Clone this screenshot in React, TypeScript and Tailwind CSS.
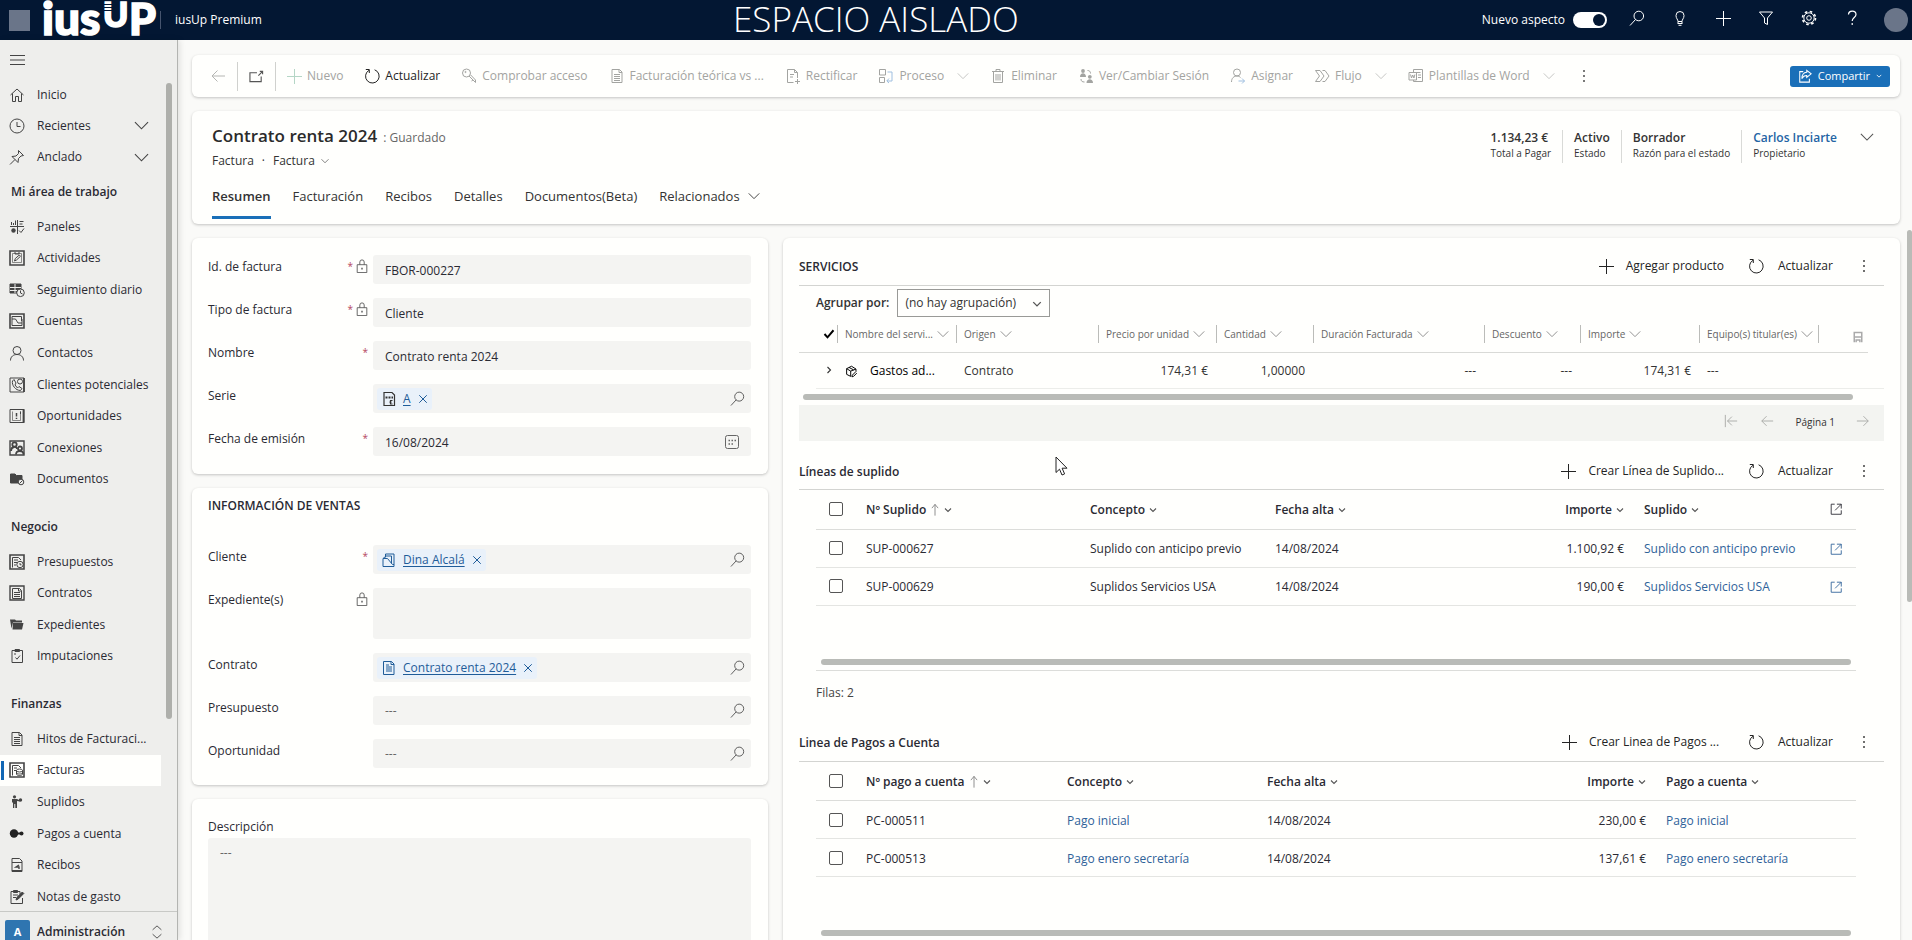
import type { ReactNode } from "react";

type SvgProps = { className?: string; children: ReactNode };

const Svg = ({ className = "size-4", children }: SvgProps) => (
  <svg viewBox="0 0 16 16" fill="none" stroke="currentColor" strokeWidth="1" aria-hidden="true" className={`shrink-0 ${className}`}>
    {children}
  </svg>
);

type IconProps = { className?: string };

const Chevron = ({ className = "size-3" }: IconProps) => (
  <Svg className={className}><path d="M1 4.5 8 11.5 15 4.5" strokeWidth="1.2" /></Svg>
);
const SmallChevron = ({ className = "size-2" }: IconProps) => (
  <Svg className={className}><path d="M2 5 8 11 14 5" strokeWidth="2.2" /></Svg>
);
const Search = ({ className }: IconProps) => (
  <Svg className={className}><circle cx="9.8" cy="6" r="4.8" /><path d="M6.5 9.5 1 15.5" /></Svg>
);
const Plus = ({ className }: IconProps) => (
  <Svg className={className}><path d="M8.5 1v15M1 8.5h15" /></Svg>
);
const Refresh = ({ className }: IconProps) => (
  <Svg className={className}><path d="M5 2.3A6.8 6.8 0 1 0 10.6 1.8M1.8 1.5H5.3V5" /></Svg>
);
const Close = ({ className = "size-2.5" }: IconProps) => (
  <Svg className={className}><path d="M2 2l12 12M14 2 2 14" strokeWidth="1.6" /></Svg>
);
const Lock = () => (
  <Svg className="size-3.5"><path d="M2.500 6.500h11v9h-11z" /><path d="M5.500 6.500V3.500a2.500 2.500 0 0 1 5 0v3" /><path d="M7.2 11h1.6" strokeWidth="1.8" /></Svg>
);
const More = () => (
  <Svg className="size-4"><path d="M8 2v2M8 7v2M8 12v2" strokeWidth="1.3" /></Svg>
);
const ArrowLeft = ({ className }: IconProps) => (
  <Svg className={className}><path d="M15 8H2M7.5 2.5 2 8l5.5 5.5" /></Svg>
);
const ArrowRight = ({ className }: IconProps) => (
  <Svg className={className}><path d="M1 8h13M8.5 2.5 14 8l-5.5 5.5" /></Svg>
);
const OpenOut = ({ className = "size-3.5" }: IconProps) => (
  <Svg className={className}><path d="M6.5 2.500H2.500v11.500H14V9.500M9 2.500h5V7.500M14 2.500 7 9.500" /></Svg>
);
const DocLines = ({ className }: IconProps) => (
  <Svg className={className}><path d="M3 1.5h7.5L13 4v10.5H3zM10 1.5V4.5h3" /><path d="M5 6.5h6M5 8.5h6M5 10.5h6M5 12.5h6" /></Svg>
);

const sideIcons: Record<string, ReactNode> = {
  Inicio: <Svg><path d="M1.5 8 8 2l6.5 6M3.500 6.500v8h3v-5h3v5h3v-8" /></Svg>,
  Recientes: <Svg><circle cx="8" cy="8" r="7" /><path d="M8 4v4.5h3.5" /></Svg>,
  Anclado: <Svg><path d="M9.500 1.500 14.500 6.500l-2.500.5-2.500 2.500-.5 4L3 7.500 7 7l2.500-2.500zM6 10.500 1 15.500" /></Svg>,
  Paneles: <Svg><path d="M8.500 1v14M1 7.500h14" /><path d="M2.500 3v3M4.500 4v2M6.500 1.500V6M10.500 2.500h4M10.500 5h3M10 11.500l2 2 3-4" /><circle cx="4.500" cy="11.500" r="2.200" fill="currentColor" stroke="none" /></Svg>,
  Actividades: <Svg><path d="M1 1h14v14H1z" strokeWidth="1.600" /><path d="M3.500 3.500h9v9h-9z" opacity=".6" /><path d="M6 2v2h4V2M5.500 11l.8-2.500 4-3.500 1.200 1.300-4 3.700z" /></Svg>,
  "Seguimiento diario": <Svg><path d="M1 2h11v9H1z" fill="currentColor" /><path d="M1 5.500h11M1 8.500h11M6 2v9" stroke="#eeeeec" /><circle cx="11.500" cy="10.800" r="3.800" fill="#eeeeec" /><path d="M11.500 8.500V11l2 1" /></Svg>,
  Cuentas: <Svg><path d="M1 1h14v14H1z" strokeWidth="1.600" /><path d="M3 3.500h9.500V8M3 6h3.500l2.500 4h4V6M3 3.500v9h10V10" /></Svg>,
  Contactos: <Svg><circle cx="8" cy="5.500" r="4" /><path d="M1.500 15.500c0-4 3-6 6.500-6s6.500 2 6.500 6" /></Svg>,
  "Clientes potenciales": <Svg><path d="M1 1h14v14H1z" /><path d="M15 1v14" strokeWidth="1.800" /><path d="M3.500 4c-1 4 3 9.500 8 9.500l1.500-2-3-2-1.500 1.500-2.500-3L7 6 5 2.500z" /><circle cx="11" cy="4.500" r="2.500" /></Svg>,
  Oportunidades: <Svg><path d="M1 1.500h14v13H1z" /><path d="M14.500 1v14" strokeWidth="1.800" /><path d="M3.500 3.500v9h8v-9" opacity=".6" /><path d="M7.500 5v3.500M7.500 9.800V11" strokeWidth="1.500" /><path d="M11.500 3.500V6" /></Svg>,
  Conexiones: <Svg><path d="M1 1h14v14H1z" strokeWidth="1.400" /><circle cx="5.500" cy="4.500" r="2.200" strokeWidth="1.800" /><circle cx="11" cy="8.500" r="2" strokeWidth="1.800" /><path d="M2 11c0-5 6-5 6-2M7 14.500c0-4.500 7.500-4.500 7.500 0" strokeWidth="1.800" /></Svg>,
  Documentos: <Svg><path d="M1.500 3H6l1.500 1.500H13V12H1.500z" fill="currentColor" /><circle cx="12" cy="11" r="2.800" fill="#eeeeec" /><path d="m10.500 12.500 3-3" /></Svg>,
  Presupuestos: <Svg><path d="M1 1h14v14H1z" strokeWidth="1.600" /><path d="M3.500 13.500v-10h6L12 6M5 6h4M5 8.500h3M5 11h2" /><circle cx="11" cy="10.500" r="3.200" /><path d="M11 9v1.800h1.500" /></Svg>,
  Contratos: <Svg><path d="M1 1h14v14H1z" strokeWidth="1.400" /><path d="M3.500 13.500v-10h7l2 2v8zM5 7.500h6M5 9.500h6M5 11.500h6M9.500 3.500v2.500H12" /></Svg>,
  Expedientes: <Svg><path d="M1 2.500h5l1 1h6v2H4l-1.500 6z" fill="currentColor" stroke="none" /><path d="M4 6h10.500L13 12.500H3.500z" fill="currentColor" stroke="none" /></Svg>,
  Imputaciones: <Svg><path d="M3 2.500h10.500v12H3z" /><path d="M6 1.500h4.500v2H6z" fill="currentColor" /><path d="m6.500 9.500 1.500 1.700L11 7.500M5 6h2" /></Svg>,
  "Hitos de Facturaci...": <DocLines />,
  Facturas: <Svg><path d="M1 1h14v14H1z" strokeWidth="1.600" /><path d="M3.500 13.500v-10h6L12 6M5 6h3M5 8.500h2" /><ellipse cx="10.500" cy="8.500" rx="3" ry="1.500" /><path d="M7.500 8.500v3.500c0 2 6 2 6 0V8.500M7.500 10.500c0 2 6 2 6 0" /></Svg>,
  Suplidos: <Svg><circle cx="5.500" cy="2.800" r="1.600" fill="currentColor" stroke="none" /><path d="M3 5h5l3 1.500v1L8 7v7H6.300v-4h-1v4H4V8.500H3z" fill="currentColor" stroke="none" /><circle cx="11.500" cy="6" r="1.700" fill="currentColor" stroke="none" /></Svg>,
  "Pagos a cuenta": <Svg><circle cx="5" cy="7.500" r="4.200" fill="#222" stroke="none" /><path d="M4 7.500h9" stroke="#222" strokeWidth="2" /><circle cx="12.500" cy="7.500" r="2" fill="#222" stroke="none" /></Svg>,
  Recibos: <Svg><path d="M3 1.500h7.500L13 4v10.500H3zM3 5.500h10M3 13.500h10" /><path d="M10 8 7 10h3v2" strokeWidth="1.400" /></Svg>,
  "Notas de gasto": <Svg><path d="M10 14.500H2v-12h9V5M13.500 9v5.500H10" /><path d="M4.500 1.500h4v2h-4z" fill="currentColor" /><path d="m7 11 .8-2.500 5.500-5.500 1.500 1.500-5.500 5.500zM4 6h5M4 8.500h3" fill="currentColor" /></Svg>,
};

function SideItem({ label, active, expandable }: { label: string; active?: boolean; expandable?: boolean }) {
  return (
    <a
      href="#"
      aria-current={active ? "page" : undefined}
      className={`flex items-center gap-3 pr-[17px] text-[12px] text-[#2a2a33] ${active ? "mr-[5px] bg-[#fffffd]" : ""}`}
    >
      <span className="flex items-center self-stretch pl-px">
        <span className={`h-[19px] w-[3px] ${active ? "bg-[#1267b4]" : ""}`} />
        <span className="pl-[5px] text-[#444]">{sideIcons[label]}</span>
      </span>
      <span className="flex-1 whitespace-nowrap">{label}</span>
      {expandable && <Chevron className="size-[15px] text-[#444]" />}
    </a>
  );
}

const SideHeading = ({ children, first }: { children: ReactNode; first?: boolean }) => (
  <h2 className={`flex h-[38px] shrink-0 items-center pl-[11px] text-[12px] font-semibold text-[#2a2a33] ${first ? "" : "mt-[13px]"}`}>{children}</h2>
);

function Sidebar() {
  return (
    <nav aria-label="Navegación" className="z-10 flex w-[178px] shrink-0 flex-col border-r border-[#b3b4b1] bg-[#eeeeec] shadow-[2px_0_6px_rgba(0,0,0,0.10)]">
      <div className="flex h-[39px] shrink-0 items-center pl-[9px]">
        <button type="button" aria-label="Menú" className="text-[#444]">
          <Svg><path d="M1 3.500h15M1 8h15M1 12.500h15" /></Svg>
        </button>
      </div>
      <div className="flex min-h-0 flex-1 overflow-hidden">
        <div className="flex w-[166px] flex-col">
          <div className="grid h-[94px] shrink-0 auto-rows-fr">
            <SideItem label="Inicio" />
            <SideItem label="Recientes" expandable />
            <SideItem label="Anclado" expandable />
          </div>
          <SideHeading first>Mi área de trabajo</SideHeading>
          <div className="grid h-[284px] shrink-0 auto-rows-fr">
            {["Paneles", "Actividades", "Seguimiento diario", "Cuentas", "Contactos", "Clientes potenciales", "Oportunidades", "Conexiones", "Documentos"].map((l) => (
              <SideItem key={l} label={l} />
            ))}
          </div>
          <SideHeading>Negocio</SideHeading>
          <div className="grid h-[126px] shrink-0 auto-rows-fr">
            {["Presupuestos", "Contratos", "Expedientes", "Imputaciones"].map((l) => (
              <SideItem key={l} label={l} />
            ))}
          </div>
          <SideHeading>Finanzas</SideHeading>
          <div className="grid h-[190px] shrink-0 auto-rows-fr">
            {["Hitos de Facturaci...", "Facturas", "Suplidos", "Pagos a cuenta", "Recibos", "Notas de gasto"].map((l) => (
              <SideItem key={l} label={l} active={l === "Facturas"} />
            ))}
          </div>
        </div>
        <div className="mt-1 h-[636px] w-1.5 shrink-0 rounded-full bg-[#aeafab]" />
      </div>
      <div className="h-[29px] shrink-0 overflow-hidden border-t border-[#c8c9c6]">
        <button type="button" className="flex h-[40px] w-full items-center pr-[13px] pl-[5px] text-left">
          <span className="flex size-[25px] items-center justify-center rounded-xs bg-[#2f75b0] text-[11px] font-bold text-white">A</span>
          <span className="flex-1 pl-[7px] text-[12px] leading-4 font-semibold text-[#2a2a33]">Administración</span>
          <Svg className="size-3.5 text-[#444]"><path d="M3 5.500 8 1l5 4.500M3 10.500 8 15l5-4.500" /></Svg>
        </button>
      </div>
    </nav>
  );
}

const topIcons: { label: string; icon: ReactNode }[] = [
  { label: "Buscar", icon: <Search /> },
  { label: "Sugerencias", icon: <Svg><path d="M6 11.500C6 9.500 4 8.500 4 5.500a4 4 0 0 1 8 0c0 3-2 4-2 6zM6.500 15.300h3M6 11.500v2.500M10 11.500v2.500M6 13.500h4" /></Svg> },
  { label: "Nuevo registro", icon: <Plus /> },
  { label: "Filtrar", icon: <Svg><path d="M1.500 2h13L9.500 8v6.500l-3-1.500V8z" /></Svg> },
  { label: "Configuración", icon: <Svg><circle cx="8" cy="8" r="5.200" /><circle cx="8" cy="8" r="2.300" /><circle cx="8" cy="8" r="6.500" strokeDasharray="2.550 2.550" strokeWidth="1.600" /></Svg> },
  { label: "Ayuda", icon: <Svg><path d="M4.500 4.500c0-4.500 7.500-4.500 7.500 0 0 3-3.800 3-3.800 6.500M8.200 13v2" strokeWidth="1.200" /></Svg> },
];

function TopBar() {
  return (
    <header className="relative flex h-10 shrink-0 items-center bg-[#031733] text-white">
      <button type="button" aria-label="Aplicaciones" className="ml-[9px] size-[21px] bg-[#6a7589]" />
      <svg width="117" height="40" viewBox="0 0 117 40" role="img" aria-label="iusUP" className="ml-[13px] shrink-0" fill="#fff" stroke="#fff" strokeWidth="1.600" fontFamily="Lato, sans-serif" fontWeight="900">
        <text x="-1" y="35" fontSize="46">ius</text>
        <text x="60" y="27" fontSize="34">U</text>
        <text x="86" y="35" fontSize="43">P</text>
        <path d="M61 4.500h9M61 7.500h9M61 10.500h9" stroke="#031733" strokeWidth="1.200" />
      </svg>
      <span className="h-[18px] w-px bg-[#46546e]" />
      <span className="ml-3.5 text-[12px]">iusUp Premium</span>
      <span className="absolute top-0 left-[733px] text-[35px] leading-[37px] font-light">ESPACIO AISLADO</span>
      <label className="ml-auto flex items-center gap-2 text-[12px]">
        Nuevo aspecto
        <input type="checkbox" role="switch" defaultChecked className="peer sr-only" />
        <span className="flex h-4 w-[34px] items-center justify-end rounded-full bg-white px-0.5">
          <span className="size-3 rounded-full bg-[#031733]" />
        </span>
      </label>
      <div className="ml-[22px] flex items-center gap-[27px] pb-1">
        {topIcons.map((t) => (
          <button key={t.label} type="button" aria-label={t.label}>{t.icon}</button>
        ))}
      </div>
      <button type="button" aria-label="Cuenta" className="mr-1 ml-6 size-6 rounded-full bg-[#6a7589]" />
    </header>
  );
}

const commands: { label: string; icon: ReactNode; on?: boolean; menu?: boolean }[] = [
  { label: "Nuevo", icon: <Plus className="size-4 text-[#b5d6c6]" /> },
  { label: "Actualizar", icon: <Refresh />, on: true },
  { label: "Comprobar acceso", icon: <Svg><circle cx="5.500" cy="5" r="4" /><path d="M8 8l6.500 6.500v-2.500l-5-5.200M12 12l-1.500 1" /><circle cx="4.500" cy="4" r=".6" /></Svg> },
  { label: "Facturación teórica vs ...", icon: <DocLines /> },
  { label: "Rectificar", icon: <Svg><path d="M8.500 14.500H2.500v-13h7l3 3v5.500M9.500 1.500v3h3M5 6.500h4M5 9h3M12.500 11v5M10 13.500h5" /></Svg> },
  { label: "Proceso", icon: <Svg><path d="M1.500 1.500h6v5.500h-6zM1.500 9.500h5v5h-5z" /><path d="M9.500 4h4.500v9H9M11 10.500 8.800 13l2.200 2" stroke="#9fbfe0" /></Svg>, menu: true },
  { label: "Eliminar", icon: <Svg><path d="M2 3.500h12M3.500 3.500v11h9v-11M6 3.500v-2h4v2M6 6v6.500M8 6v6.500M10 6v6.500" /></Svg> },
  { label: "Ver/Cambiar Sesión", icon: <Svg><circle cx="5" cy="3" r="1.900" fill="currentColor" stroke="none" /><path d="M2 9c0-5 6-5 6 0zM8.500 15c0-5 6.500-5 6.500 0z" fill="currentColor" stroke="none" /><circle cx="11.800" cy="8.800" r="1.900" fill="currentColor" stroke="none" /><path d="M9.500 2.500c2 0 3 1 3 3M3 11c0 2 1 3 3.500 3" /></Svg> },
  { label: "Asignar", icon: <Svg><circle cx="7" cy="4.500" r="3.500" /><path d="M1.500 14c0-4 2.500-6 5.500-6 1.500 0 2.500.5 3.500 1.500" /><path d="M8.500 13h6M12 10.500l2.500 2.500-2.500 2.500" stroke="#9fbfe0" /></Svg> },
  { label: "Flujo", icon: <Svg><path d="M1.500 2.500h4.500l4 5.500-4 5.500H1.500l4-5.500zM8.500 2.500H11l4 5.500-4 5.500H8.500" /></Svg>, menu: true },
  { label: "Plantillas de Word", icon: <Svg><path d="M5.500 4V1.500h9v12h-9V12M7.500 4.500h5M10 7h3M10 9.500h3" /><path d="M1 4.500h7.500v7.500H1zM2.500 6.500l1 3.500 1.200-3 1.200 3 1-3.500" /></Svg>, menu: true },
];

function CommandBar() {
  return (
    <div role="toolbar" aria-label="Comandos" className="flex h-[42px] shrink-0 items-center rounded-md bg-[#fffffd] pr-2.5 pl-[18px] shadow-[0_1px_3px_rgba(0,0,0,0.22)]">
      <button type="button" aria-label="Atrás" className="mr-[11px] text-[#b5b6b3]"><ArrowLeft /></button>
      <span className="h-[29px] w-px bg-[#d0d1ce]" />
      <button type="button" aria-label="Abrir en ventana nueva" className="mx-[11px] text-[#555]">
        <Svg className="size-[15px]"><path d="M8.500 4H1v9.500h12V8M10 7l4.500-4.500M11.500 2.500h3v3" strokeWidth="1.200" /></Svg>
      </button>
      <span className="mr-[10px] h-[29px] w-px bg-[#d0d1ce]" />
      <div className="flex items-center gap-[21px]">
        {commands.map((c) => (
          <button key={c.label} type="button" disabled={!c.on} className={`flex items-center gap-[5px] text-[12px] whitespace-nowrap ${c.on ? "text-[#242424]" : "text-[#a3a4a1]"}`}>
            {c.icon}
            {c.label}
            {c.menu && <Chevron className="ml-2 size-3 text-[#c0c1be]" />}
          </button>
        ))}
        <button type="button" aria-label="Más comandos" className="text-[#333]"><More /></button>
      </div>
      <button type="button" className="ml-auto flex h-[21px] items-center gap-1.5 rounded-[3px] bg-[#1a6fb8] px-2 text-[11px] text-white">
        <Svg className="size-3.5"><path d="M6 3H2v12h11v-4M10 1.500 15 5.500 10 9.500V7.500C7 7.500 5.500 9 4.500 11 4.500 6.500 7 4 10 3.800z" strokeWidth="1.200" /></Svg>
        Compartir
        <SmallChevron className="size-1.5" />
      </button>
    </div>
  );
}

const facts = [
  { value: "1.134,23 €", label: "Total a Pagar" },
  { value: "Activo", label: "Estado" },
  { value: "Borrador", label: "Razón para el estado" },
  { value: "Carlos Inciarte", label: "Propietario", link: true },
];

function RecordHeader() {
  return (
    <section className="mt-[14px] flex h-[113px] shrink-0 justify-between rounded-md bg-[#fffffd] pr-[26px] pl-5 shadow-[0_1px_3px_rgba(0,0,0,0.22)]">
      <div className="pt-[13px]">
        <h1 className="flex items-baseline gap-1.5 text-[17px] leading-6 font-semibold text-[#2b2b2b]">
          Contrato renta 2024
          <span className="text-[12px] font-normal text-[#666]">: Guardado</span>
        </h1>
        <div className="flex items-center text-[12px] leading-[22px] text-[#333]">
          <span>Factura</span>
          <span className="px-2">·</span>
          <button type="button" className="flex items-center gap-1.5">Factura <Chevron className="size-2" /></button>
        </div>
        <div role="tablist" className="mt-3.5 flex gap-[22px] text-[13px] leading-5 text-[#333]">
          {["Resumen", "Facturación", "Recibos", "Detalles", "Documentos(Beta)", "Relacionados"].map((t, i) => (
            <button key={t} type="button" role="tab" aria-selected={i === 0} className={`flex items-center gap-2 border-b-[3px] pb-2.5 ${i === 0 ? "border-[#1a6fb8] font-semibold" : "border-transparent"}`}>
              {t}
              {i === 5 && <Chevron className="size-3" />}
            </button>
          ))}
        </div>
      </div>
      <div className="flex items-start pt-[19px]">
        {facts.map((f, i) => (
          <div key={f.label} className={`h-[33px] px-[11px] ${i > 0 ? "border-l border-[#d9dad7]" : ""}`}>
            {f.link ? (
              <a href="#" className="block text-[12px] leading-4 font-semibold text-[#2464a4]">{f.value}</a>
            ) : (
              <div className="text-[12px] leading-4 font-semibold text-[#333]">{f.value}</div>
            )}
            <div className="text-[10px] leading-[15px] text-[#333]">{f.label}</div>
          </div>
        ))}
        <button type="button" aria-label="Más campos" className="ml-3 text-[#555]"><Chevron className="size-3.5" /></button>
      </div>
    </section>
  );
}

type FieldProps = { id: string; label: string; required?: boolean; locked?: boolean; children: ReactNode };

const Field = ({ id, label, required, locked, children }: FieldProps) => (
  <div className="flex items-start">
    <div className="flex w-[165px] shrink-0 items-center pr-1">
      <label htmlFor={id} className="flex-1 pt-0.5 text-[12px] leading-5 text-[#2a2a33]">{label}</label>
      {required && <span className={`text-[10px] leading-5 text-[#b5475f] ${locked ? "mr-0.5" : "mr-px"}`}>*</span>}
      {locked && <span className="text-[#555]"><Lock /></span>}
    </div>
    {children}
  </div>
);

const boxClass = "h-[29px] min-w-0 flex-1 rounded-[3px] bg-[#f4f4f2]";

const TextBox = ({ id, value }: { id: string; value: string }) => (
  <input id={id} defaultValue={value} className={`${boxClass} px-3 pt-0.5 text-[12px] text-[#2a2a33]`} />
);

function Lookup({ id, chip, icon }: { id: string; chip?: string; icon?: ReactNode }) {
  return (
    <div className={`${boxClass} flex items-center pr-1.5 pl-1`}>
      {chip && (
        <span className="flex h-[22px] shrink-0 items-center rounded-[3px] bg-[#e9f1fa] px-1 text-[12px] text-[#1f5c99]">
          {icon}
          <a href="#" className="ml-1.5 underline underline-offset-2">{chip}</a>
          <button type="button" aria-label={`Quitar ${chip}`} className="ml-[7px]"><Close /></button>
        </span>
      )}
      <input id={id} placeholder={chip ? undefined : "---"} className="min-w-0 flex-1 pl-2 text-[12px] placeholder:text-[#666]" />
      <button type="button" aria-label="Buscar registros" className="text-[#555]"><Search className="size-[15px]" /></button>
    </div>
  );
}

const cardClass = "rounded-md bg-[#fffffd] shadow-[0_1px_3px_rgba(0,0,0,0.22)]";

function LeftColumn() {
  return (
    <div className="flex min-w-0 flex-col gap-[14px]">
      <section className={`${cardClass} flex flex-col gap-3.5 pt-[17px] pr-[17px] pb-[18px] pl-4`}>
        <Field id="idf" label="Id. de factura" required locked><TextBox id="idf" value="FBOR-000227" /></Field>
        <Field id="tipo" label="Tipo de factura" required locked><TextBox id="tipo" value="Cliente" /></Field>
        <Field id="nombre" label="Nombre" required><TextBox id="nombre" value="Contrato renta 2024" /></Field>
        <Field id="serie" label="Serie">
          <Lookup id="serie" chip="A" icon={<Svg className="size-4 text-[#333]"><path d="M3 1.500h8L13.500 4v10.500H3z" strokeWidth="1.200" /><path d="M4.500 6.500h2M7.500 6.500h2M10.500 6.500h1.500" strokeWidth="2.200" /><path d="M11.500 9.500H9.500v3.500h2M8.500 11.200h2" strokeWidth="1.200" /></Svg>} />
        </Field>
        <Field id="fecha" label="Fecha de emisión" required>
          <div className={`${boxClass} flex items-center pr-[11px]`}>
            <input id="fecha" defaultValue="16/08/2024" className="min-w-0 flex-1 px-3 pt-0.5 text-[12px] text-[#2a2a33]" />
            <button type="button" aria-label="Elegir fecha" className="text-[#666]">
              <Svg><rect x="1.500" y="1.500" width="13" height="13" rx="2" /><path d="M4.500 6.500H6M7.500 6.500H9M10.500 6.500H12M4.500 10H6M7.500 10H9" strokeWidth="1.500" /></Svg>
            </button>
          </div>
        </Field>
      </section>

      <section className={`${cardClass} flex flex-col gap-3.5 pt-2 pr-[17px] pb-[17px] pl-4`}>
        <h2 className="mb-[15px] text-[12px] leading-5 font-semibold text-[#2a2a33]">INFORMACIÓN DE VENTAS</h2>
        <Field id="cliente" label="Cliente" required>
          <Lookup id="cliente" chip="Dina Alcalá" icon={<Svg className="size-4"><path d="M4.500 5.500V2h8.500v12.500H2V6.500h4.500l5 6H13M4.500 4h6v7.500M4.500 4.500 2 6.500" /></Svg>} />
        </Field>
        <Field id="exp" label="Expediente(s)" locked>
          <textarea id="exp" className="h-[51px] min-w-0 flex-1 resize-none rounded-[3px] bg-[#f4f4f2]" />
        </Field>
        <Field id="contrato" label="Contrato">
          <Lookup id="contrato" chip="Contrato renta 2024" icon={<Svg className="size-4"><path d="M2.500 1.500h8L13 4v10.500H2.500zM10 1.500v3h3M5 7h6M5 9h6M5 11h6M5 5h3" /></Svg>} />
        </Field>
        <Field id="presupuesto" label="Presupuesto"><Lookup id="presupuesto" /></Field>
        <Field id="oportunidad" label="Oportunidad"><Lookup id="oportunidad" /></Field>
      </section>

      <section className={`${cardClass} pt-[18px] pr-[17px] pl-4`}>
        <label htmlFor="desc" className="block text-[12px] leading-5 text-[#2a2a33]">Descripción</label>
        <textarea id="desc" placeholder="---" className="mt-px block h-[160px] w-full resize-none rounded-[3px] bg-[#f4f4f2] px-3 py-1.5 text-[12px] placeholder:text-[#666]" />
      </section>
    </div>
  );
}

function SectionHead({ title, action, className, actionClass = "" }: { title: string; action: string; className: string; actionClass?: string }) {
  return (
    <div className={`flex items-center justify-between border-b border-[#d3d4d1] pr-3 ${className}`}>
      <h2 className="pt-0.5 text-[12px] font-semibold text-[#2a2a33]">{title}</h2>
      <div className="flex items-center text-[12px] text-[#242424]">
        <button type="button" className="flex items-center gap-3"><Plus /><span className={`text-left ${actionClass}`}>{action}</span></button>
        <button type="button" className="ml-6 flex items-center gap-3.5"><Refresh /><span className="w-[62px] text-left">Actualizar</span></button>
        <button type="button" aria-label="Más opciones" className="ml-4"><More /></button>
      </div>
    </div>
  );
}

const serviceColumns: { label: string; width: string }[] = [
  { label: "Nombre del servi...", width: "w-[119px]" },
  { label: "Origen", width: "w-[142px]" },
  { label: "Precio por unidad", width: "w-[118px]" },
  { label: "Cantidad", width: "w-[97px]" },
  { label: "Duración Facturada", width: "w-[171px]" },
  { label: "Descuento", width: "w-[96px]" },
  { label: "Importe", width: "w-[119px]" },
  { label: "Equipo(s) titular(es)", width: "w-[119px]" },
];

function Services() {
  return (
    <section>
      <SectionHead title="SERVICIOS" action="Agregar producto" className="h-[48px] pt-[9px]" />
      <div className="flex items-center gap-2 pt-[3px] pl-[17px]">
        <label htmlFor="agrupar" className="text-[12px] font-semibold text-[#333]">Agrupar por:</label>
        <div className="relative">
          <select id="agrupar" className="h-7 w-[153px] appearance-none border border-[#999a97] bg-[#fffffd] pl-[7px] text-[12px] text-[#333]">
            <option>(no hay agrupación)</option>
          </select>
          <span className="pointer-events-none absolute top-2.5 right-2 text-[#555]"><SmallChevron className="size-2.5" /></span>
        </div>
      </div>
      <table className="w-full table-fixed text-[12px] text-[#333]">
        <thead>
          <tr className="h-[35px]">
            <th className="w-[38px] border-b border-[#d9dad7] p-0 pl-6 text-black"><Svg className="size-3"><path d="M2 8l4 4.500L14 3" strokeWidth="2.600" /></Svg></th>
            {serviceColumns.map((c) => (
              <th key={c.label} className={`border-b border-[#d9dad7] p-0 font-normal ${c.width}`}>
                <div className="flex h-[18px] items-center gap-1 border-l border-[#bbbcb9] pl-[7px] text-[10px] whitespace-nowrap text-[#666]">
                  {c.label}<Chevron className="size-3 text-[#888]" />
                </div>
              </th>
            ))}
            <th className="border-b border-[#d9dad7] p-0">
              <div className="flex h-[18px] items-end border-l border-[#bbbcb9] pl-[33px] text-[#aaa]">
                <Svg className="size-3"><path d="M3 15V2h10v13M3 8h10M5.500 15v-3h5v3" strokeWidth="2" /></Svg>
              </div>
            </th>
            <th className="w-4 p-0" />
          </tr>
        </thead>
        <tbody>
          <tr className="h-[36px]">
            <td className="p-0 pl-[26px]"><SmallChevron className="size-2 -rotate-90" /></td>
            <td className="p-0 pt-0.5">
              <div className="flex items-center gap-3 pl-[8px] text-black">
                <Svg className="size-[13px]"><path d="M8 1.500 2 4.500v7L7 14V7.500L13.500 5zM2 4.500l5 3M5 3l5.500 3M13.500 5v3L9 12.500l-.5 2 2-.5L14.500 10" strokeWidth="1.200" /></Svg>
                <span>Gastos ad...</span>
              </div>
            </td>
            <td className="p-0 pt-0.5 pl-2">Contrato</td>
            <td className="p-0 pt-0.5 pr-2 text-right">174,31 €</td>
            <td className="p-0 pt-0.5 pr-2 text-right">1,00000</td>
            <td className="p-0 pt-0.5 pr-2 text-right">---</td>
            <td className="p-0 pt-0.5 pr-2 text-right">---</td>
            <td className="p-0 pt-0.5 pr-2 text-right">174,31 €</td>
            <td className="p-0 pt-0.5 pl-2">---</td>
            <td className="p-0" />
            <td className="p-0" />
          </tr>
        </tbody>
      </table>
      <div className="ml-[17px] h-px bg-[#ecedea]" />
      <div className="mt-[5px] mr-[31px] ml-1 h-1.5 rounded-full bg-[#b9bbb7]" />
      <div className="mt-[5px] flex h-9 items-center justify-end bg-[#f3f4f1] pr-3.5 pb-1 text-[#a5a6a3]">
        <button type="button" aria-label="Primera página"><Svg className="size-3.5"><path d="M1.500 1v14M15 8H4M9 3 4 8l5 5" /></Svg></button>
        <button type="button" aria-label="Página anterior" className="ml-[22px]"><ArrowLeft className="size-3.5" /></button>
        <span className="mx-[21px] pt-0.5 text-[10px] text-[#333]">Página 1</span>
        <button type="button" aria-label="Página siguiente"><ArrowRight className="size-3.5" /></button>
      </div>
    </section>
  );
}

const CheckBox = ({ label }: { label: string }) => (
  <input type="checkbox" aria-label={label} className="block size-[14px] appearance-none rounded-xs border border-[#555]" />
);

type Col = { label: string; width: string; sorted?: boolean; right?: boolean };
type Cell = { text: string; link?: boolean };

type GridProps = { title: string; action: string; cols: Col[]; rows: Cell[][]; openable?: boolean };

function SubGrid({ title, action, cols, rows, openable }: GridProps) {
  return (
    <section>
      <SectionHead title={title} action={action} className="h-[38px]" actionClass="min-w-[135px]" />
      <div className="mr-7 ml-[17px]">
        <table className="w-full table-fixed text-[12px] text-[#2a2a33]">
          <thead>
            <tr className="h-[39px] border-b border-[#dcddda]">
              <th className="w-[41px] p-0 pl-[13px]"><CheckBox label="Seleccionar todo" /></th>
              {cols.map((c) => (
                <th key={c.label} className={`p-0 pt-0.5 font-semibold ${c.width}`}>
                  <button type="button" className={`flex w-full items-center gap-1 ${c.right ? "justify-end pr-[11px]" : "pl-[9px]"}`}>
                    {c.label}
                    {c.sorted && <Svg className="h-3.5 w-2.5 text-[#777]"><path d="M8 17V-1M3 5l5-6 5 6" strokeWidth="1.300" /></Svg>}
                    <SmallChevron className="size-2 text-[#555]" />
                  </button>
                </th>
              ))}
              {openable && <th className="w-[38px] p-0 pl-[11px]"><OpenOut /></th>}
            </tr>
          </thead>
          <tbody>
            {rows.map((r) => (
              <tr key={r[0].text} className="h-[38px] border-b border-[#e4e5e2]">
                <td className="p-0 pl-[13px]"><CheckBox label={`Seleccionar ${r[0].text}`} /></td>
                {r.map((c, i) => (
                  <td key={cols[i].label} className={`p-0 pt-0.5 whitespace-nowrap ${cols[i].right ? "pr-[11px] text-right" : "pl-[9px]"}`}>
                    {c.link ? <a href="#" className="text-[#2f6299]">{c.text}</a> : c.text}
                  </td>
                ))}
                {openable && <td className="p-0 pt-0.5 pl-[11px] text-[#2f6299]"><OpenOut /></td>}
              </tr>
            ))}
          </tbody>
        </table>
        <div className="mx-[5px] mt-[53px] h-1.5 rounded-full bg-[#b9bbb7]" />
        <div className="mt-[5px] flex h-[43px] items-center border-t border-[#dcddda] pt-0.5 text-[12px] text-[#444]">Filas: 2</div>
      </div>
    </section>
  );
}

function RightColumn() {
  return (
    <div className={`${cardClass} flex min-w-0 flex-col gap-[11px] pr-4 pl-4`}>
      <Services />
      <SubGrid
        title="Líneas de suplido"
        action="Crear Línea de Suplido..."
        openable
        cols={[
          { label: "Nº Suplido", width: "w-[224px]", sorted: true },
          { label: "Concepto", width: "w-[185px]" },
          { label: "Fecha alta", width: "w-[184px]" },
          { label: "Importe", width: "", right: true },
          { label: "Suplido", width: "w-[183px]" },
        ]}
        rows={[
          [{ text: "SUP-000627" }, { text: "Suplido con anticipo previo" }, { text: "14/08/2024" }, { text: "1.100,92 €" }, { text: "Suplido con anticipo previo", link: true }],
          [{ text: "SUP-000629" }, { text: "Suplidos Servicios USA" }, { text: "14/08/2024" }, { text: "190,00 €" }, { text: "Suplidos Servicios USA", link: true }],
        ]}
      />
      <SubGrid
        title="Linea de Pagos a Cuenta"
        action="Crear Linea de Pagos ..."
        cols={[
          { label: "Nº pago a cuenta", width: "w-[201px]", sorted: true },
          { label: "Concepto", width: "w-[200px]" },
          { label: "Fecha alta", width: "w-[200px]" },
          { label: "Importe", width: "", right: true },
          { label: "Pago a cuenta", width: "w-[199px]" },
        ]}
        rows={[
          [{ text: "PC-000511" }, { text: "Pago inicial", link: true }, { text: "14/08/2024" }, { text: "230,00 €" }, { text: "Pago inicial", link: true }],
          [{ text: "PC-000513" }, { text: "Pago enero secretaría", link: true }, { text: "14/08/2024" }, { text: "137,61 €" }, { text: "Pago enero secretaría", link: true }],
        ]}
      />
    </div>
  );
}

export default function App() {
  return (
    <div className="relative flex h-screen flex-col overflow-hidden bg-[#fafaf8] font-['Open_Sans',sans-serif]">
      <TopBar />
      <div className="flex min-h-0 flex-1">
        <Sidebar />
        <main className="flex min-w-0 flex-1 flex-col pt-[15px] pr-3 pl-[14px]">
          <CommandBar />
          <RecordHeader />
          <div className="mt-[14px] grid min-h-0 flex-1 grid-cols-[576fr_1117fr] items-start gap-[15px]">
            <LeftColumn />
            <RightColumn />
          </div>
        </main>
      </div>
      <div className="absolute top-[230px] right-0 h-[372px] w-[5px] rounded-full bg-[#b9bbb7]" />
      <svg width="13" height="20" viewBox="0 0 13 20" aria-hidden="true" className="absolute top-[456px] left-[1055px]">
        <path d="M1 1v15.500l3.500-3.300 2.500 5.800 2.600-1.100-2.500-5.700H12z" fill="#fff" stroke="#222" />
      </svg>
    </div>
  );
}
